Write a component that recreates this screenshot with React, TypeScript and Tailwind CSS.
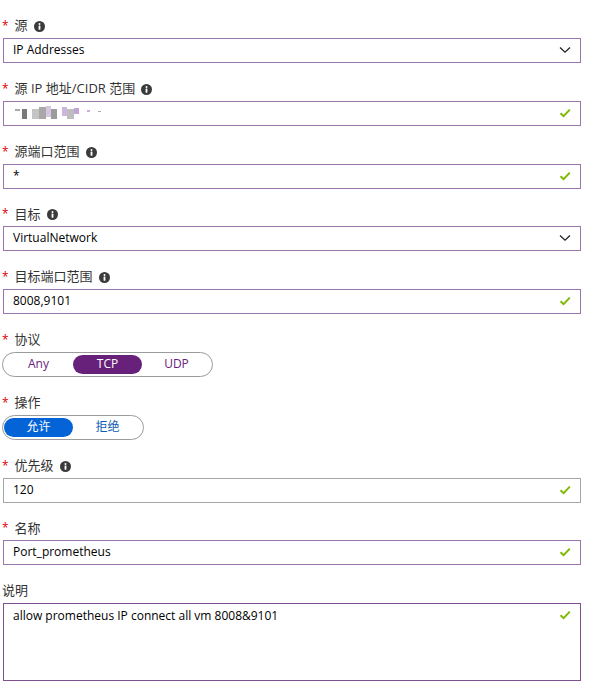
import { ReactNode } from "react";

const font = { fontFamily: '"Open Sans", "Noto Sans CJK SC", sans-serif' };

const InfoIcon = () => (
  <svg width="11" height="11" viewBox="0 0 12 12" className="ml-[6px] mt-[1px]">
    <circle cx="6" cy="6" r="6" fill="#3b3b3b" />
    <circle cx="6" cy="3.2" r="1.1" fill="#fff" />
    <rect x="5" y="5" width="2" height="4.6" rx="0.5" fill="#fff" />
  </svg>
);

const Check = () => (
  <svg width="12" height="10" viewBox="0 0 12 10">
    <path d="M1.5 5.2 L4.6 8.2 L10.8 1.6" fill="none" stroke="#7fba00" strokeWidth="2" />
  </svg>
);

const Chevron = () => (
  <svg width="12" height="8" viewBox="0 0 12 8">
    <path d="M1 1.5 L6 6.2 L11 1.5" fill="none" stroke="#222" strokeWidth="1.3" />
  </svg>
);

interface FieldProps {
  label: string;
  required?: boolean;
  info?: boolean;
  children: ReactNode;
}

const Field = ({ label, required = true, info, children }: FieldProps) => (
  <div className="flex flex-col gap-[2px]">
    <div className="h-[20px] flex items-center text-[13px] text-[#333] pl-[2px]">
      {required && <span className="text-[#e00000] text-[12px] mr-[6px]">*</span>}
      <span>{label}</span>
      {info && <InfoIcon />}
    </div>
    <div className="flex pl-[3px]">{children}</div>
  </div>
);

const Input = ({
  value,
  icon,
  gray,
}: {
  value: ReactNode;
  icon: "check" | "chevron";
  gray?: boolean;
}) => (
  <div
    className={`h-[25px] w-[578px] border flex items-center justify-between px-[9px] pb-[1px] text-[12px] text-black ${
      gray ? "border-[#a6a6a6]" : "border-[#9a74ab]"
    }`}
  >
    <div className="flex items-center">{value}</div>
    {icon === "check" ? <Check /> : <Chevron />}
  </div>
);

const Segmented = ({
  options,
  active,
  tone,
}: {
  options: string[];
  active: number;
  tone: "purple" | "blue";
}) => (
  <div className="-ml-[1px] h-[25px] flex items-center rounded-full border border-[#9b9b9b] px-[1px]">
    {options.map((o, i) => (
      <div
        key={o}
        className={`w-[69px] h-[19px] flex items-center justify-center rounded-full text-[12px] ${
          i === active
            ? tone === "purple"
              ? "bg-[#68217a] text-white"
              : "bg-[#0563d8] text-white"
            : tone === "purple"
              ? "text-[#68217a]"
              : "text-[#0a5cb5]"
        }`}
      >
        {o}
      </div>
    ))}
  </div>
);

// blurred/pixelated address as in the screenshot
const blocks = [
  { w: 5, h: 2, c: "#aaa", m: 2, t: -6 },
  { w: 5, h: 10, c: "#7a7a7a", m: 5, t: 2 },
  { w: 7, h: 10, c: "#c4c4c4", m: 0, t: 2 },
  { w: 7, h: 12, c: "#a8a8a8", m: 0, t: 0 },
  { w: 5, h: 11, c: "#d6c6e2", m: 0, t: -2 },
  { w: 6, h: 10, c: "#9c9c9c", m: 5, t: 2 },
  { w: 5, h: 9, c: "#cbb6de", m: 0, t: -2 },
  { w: 7, h: 10, c: "#bdbdbd", m: 0, t: 3 },
  { w: 5, h: 6, c: "#c1a4d6", m: 8, t: -4 },
  { w: 3, h: 2, c: "#c9b0dd", m: 8, t: -4 },
  { w: 3, h: 1, c: "#aaa", m: 0, t: -2 },
];

const Redacted = () => (
  <div className="flex items-center h-[16px] blur-[0.5px] pl-[2px]">
    {blocks.map((b, i) => (
      <div
        key={i}
        style={{ width: b.w, height: b.h, background: b.c, marginRight: b.m, marginTop: b.t }}
      />
    ))}
  </div>
);

export default function App() {
  return (
    <div
      className="w-[599px] h-[693px] bg-white pt-[16px] flex flex-col gap-[15.8px] overflow-hidden"
      style={font}
    >
      <Field label="源" info>
        <Input value="IP Addresses" icon="chevron" />
      </Field>
      <Field label="源 IP 地址/CIDR 范围" info>
        <Input value={<Redacted />} icon="check" />
      </Field>
      <Field label="源端口范围" info>
        <Input value="*" icon="check" />
      </Field>
      <Field label="目标" info>
        <Input value="VirtualNetwork" icon="chevron" />
      </Field>
      <Field label="目标端口范围" info>
        <Input value="8008,9101" icon="check" />
      </Field>
      <Field label="协议">
        <Segmented options={["Any", "TCP", "UDP"]} active={1} tone="purple" />
      </Field>
      <Field label="操作">
        <Segmented options={["允许", "拒绝"]} active={0} tone="blue" />
      </Field>
      <Field label="优先级" info>
        <Input value="120" icon="check" gray />
      </Field>
      <Field label="名称">
        <Input value="Port_prometheus" icon="check" />
      </Field>
      <Field label="说明" required={false}>
        <div className="w-[578px] h-[78px] border border-[#7d4f8f] flex justify-between px-[9px] pt-[3px] text-[12px] text-black">
          <span>allow prometheus IP connect all vm 8008&amp;9101</span>
          <div className="pt-[3px]">
            <Check />
          </div>
        </div>
      </Field>
    </div>
  );
}
